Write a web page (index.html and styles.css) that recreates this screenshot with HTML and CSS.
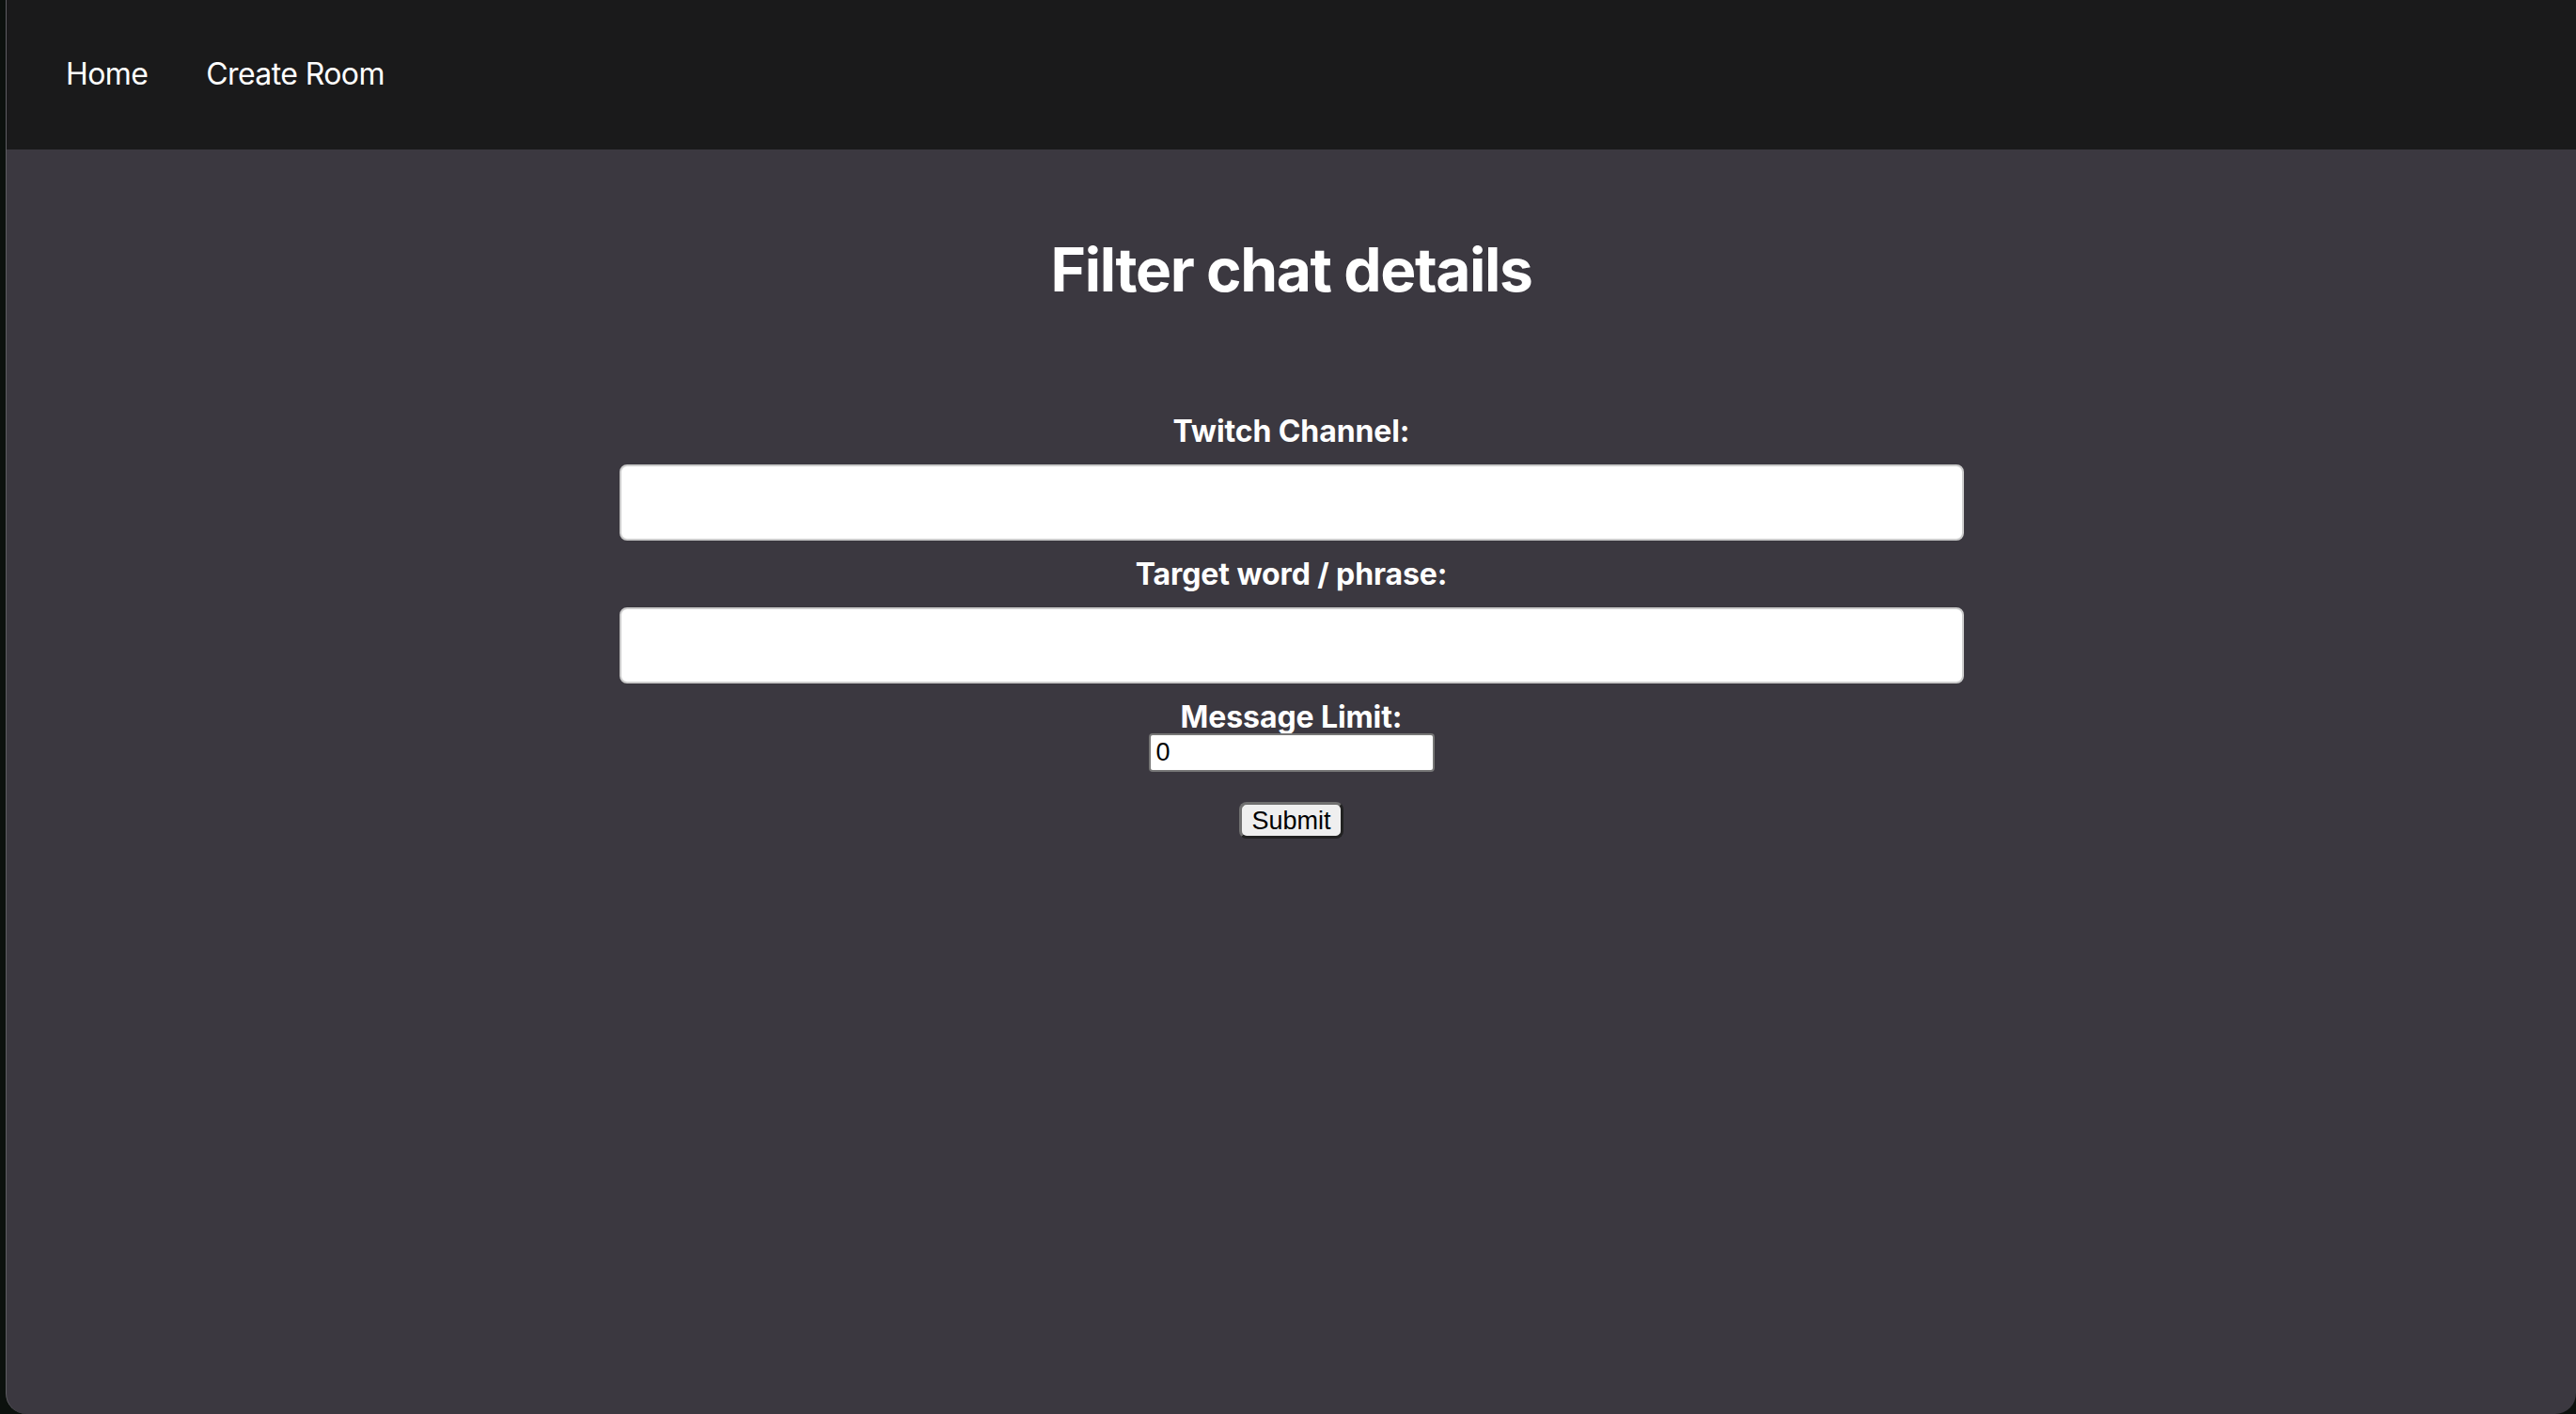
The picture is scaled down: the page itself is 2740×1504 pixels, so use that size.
FILE: index.html
```html
<!DOCTYPE html>
<html lang="en">
<head>
<meta charset="utf-8">
<title>Filter chat details</title>
<link rel="stylesheet" href="styles.css">
</head>
<body>
<div class="window">
  <nav class="topnav">
    <a class="nav-link" href="#">Home</a>
    <a class="nav-link" href="#">Create Room</a>
  </nav>
  <main class="content">
    <h1 class="title">Filter chat details</h1>
    <form class="filter-form">
      <label class="field-label" for="channel">Twitch Channel:</label>
      <input class="text-input" type="text" id="channel">
      <label class="field-label" for="target">Target word / phrase:</label>
      <input class="text-input" type="text" id="target">
      <label class="field-label" for="limit">Message Limit:</label>
      <input class="number-input" type="text" id="limit" value="0">
      <button class="submit-btn" type="button">Submit</button>
    </form>
  </main>
</div>
</body>
</html>
```
FILE: styles.css
```css
html, body {
  margin: 0;
  padding: 0;
  height: 100%;
}
body {
  background: #0c110e;
  font-family: Inter, "Noto Sans", sans-serif;
  overflow: hidden;
}
.window {
  margin-left: 6px;
  height: 1504px;
  border-left: 1px solid #5d5c62;
  border-radius: 0 0 22px 22px;
  background: #3b3840;
  overflow: hidden;
  display: flex;
  flex-direction: column;
}
.topnav {
  height: 159px;
  flex: none;
  background: #1a1a1b;
  display: flex;
  align-items: center;
  padding-left: 63px;
  padding-bottom: 2px;
  box-sizing: border-box;
  gap: 62px;
}
.nav-link {
  color: #ffffff;
  text-decoration: none;
  font-size: 32px;
  font-weight: 400;
  letter-spacing: -0.6px;
}
.content {
  flex: 1;
  padding-top: 89px;
  display: flex;
  flex-direction: column;
  align-items: center;
}
.title {
  margin: 0 0 113px 0;
  color: #ffffff;
  font-size: 64px;
  font-weight: 700;
  line-height: 78px;
  letter-spacing: -1.4px;
  text-align: center;
}
.filter-form {
  width: 1430px;
  display: flex;
  flex-direction: column;
  align-items: center;
}
.field-label {
  color: #ffffff;
  font-size: 32px;
  font-weight: 700;
  line-height: 39px;
  letter-spacing: -0.1px;
  text-align: center;
}
.text-input {
  width: 100%;
  height: 81px;
  box-sizing: border-box;
  margin: 16px 0;
  padding: 24px 40px;
  border: 2px solid #cccccc;
  border-radius: 8px;
  background: #ffffff;
  font-size: 26px;
  outline: none;
}
.number-input {
  width: 304px;
  height: 41px;
  box-sizing: border-box;
  margin: -2px 0 0 0;
  padding: 2px 6px;
  border: 2px solid #767676;
  border-radius: 4px;
  background: #ffffff;
  color: #000000;
  font-family: "Liberation Sans", Arial, sans-serif;
  font-size: 27px;
  outline: none;
}
.submit-btn {
  margin-top: 32px;
  width: 111px;
  height: 39px;
  box-sizing: border-box;
  padding: 0;
  background: #efefef;
  color: #000000;
  border: 3px solid #6d6d6d;
  border-color: #707070 #222222 #222222 #707070;
  border-radius: 8px;
  font-family: "Liberation Sans", Arial, sans-serif;
  font-size: 27px;
  line-height: 30px;
}
```
